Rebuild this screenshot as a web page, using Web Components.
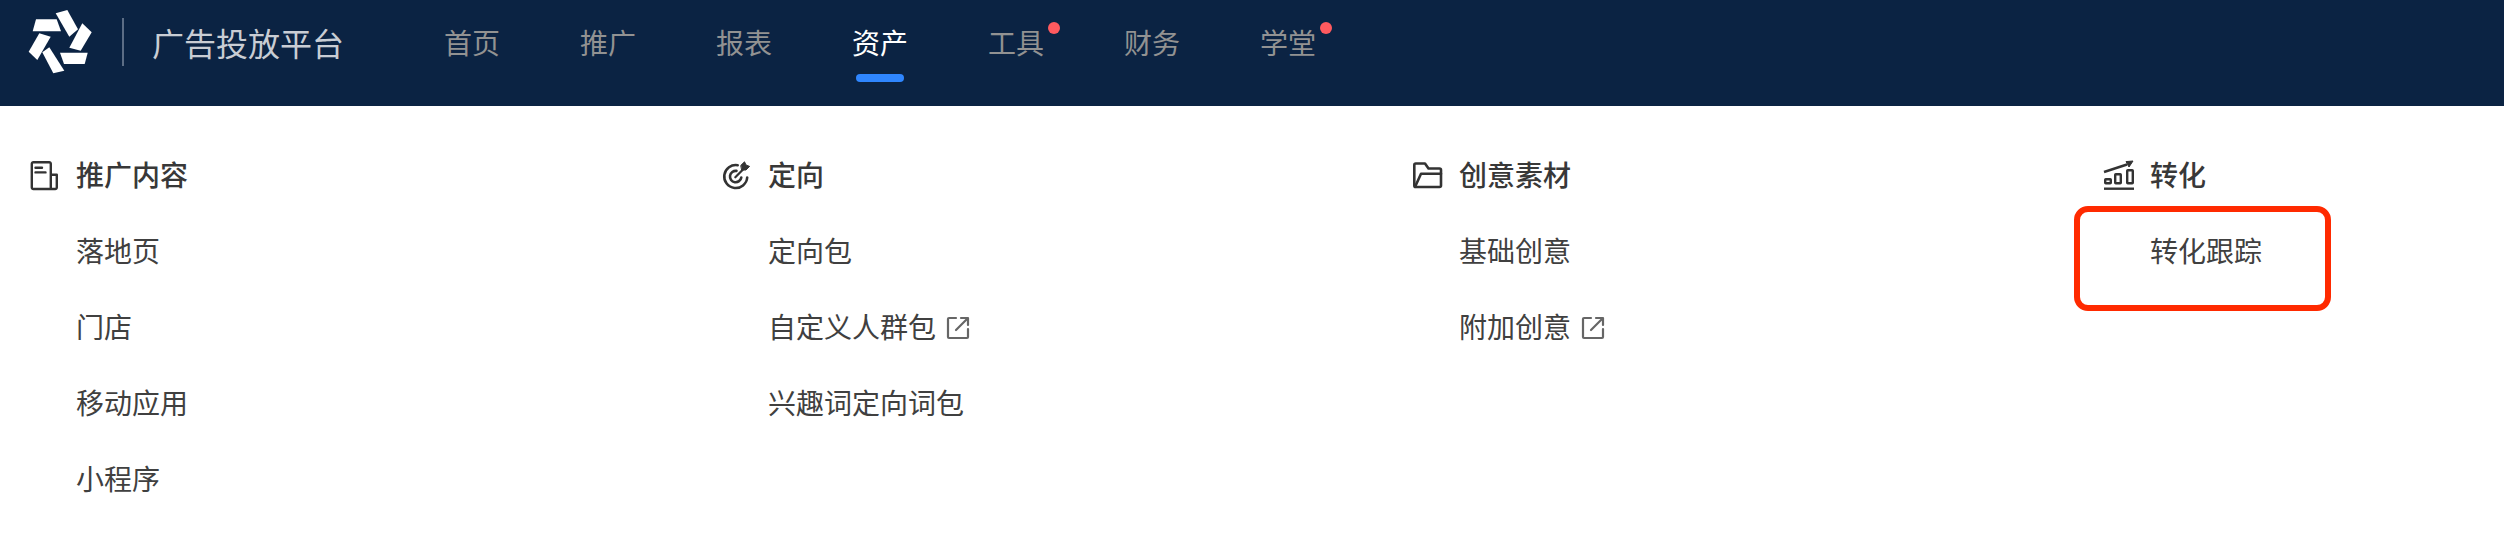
<!DOCTYPE html>
<html lang="zh-CN">
<head>
<meta charset="utf-8">
<title>广告投放平台</title>
<style>
  html, body {
    margin: 0;
    background: #fff;
    font-family: "Noto Sans CJK SC", "Noto Sans", sans-serif;
  }
</style>
</head>
<body>
<ad-header>
  <nav-tab>首页</nav-tab>
  <nav-tab>推广</nav-tab>
  <nav-tab>报表</nav-tab>
  <nav-tab active>资产</nav-tab>
  <nav-tab dot>工具</nav-tab>
  <nav-tab>财务</nav-tab>
  <nav-tab dot>学堂</nav-tab>
</ad-header>

<asset-menu>
  <menu-column heading="推广内容">
    <svg slot="icon" width="32" height="32" viewBox="0 0 32 32" fill="none" stroke="#333" stroke-width="2.4" stroke-linecap="round" stroke-linejoin="round">
      <path d="M22.8 29V3.8a1.6 1.6 0 0 0-1.6-1.6H5.4a1.6 1.6 0 0 0-1.6 1.6v23.6A1.6 1.6 0 0 0 5.4 29h21.8a1.6 1.6 0 0 0 1.6-1.6V14.8h-6"/>
      <path d="M7.5 7.8h6.5M7.5 12.4h10"/>
    </svg>
    <menu-link>落地页</menu-link>
    <menu-link>门店</menu-link>
    <menu-link>移动应用</menu-link>
    <menu-link>小程序</menu-link>
  </menu-column>

  <menu-column heading="定向">
    <svg slot="icon" width="32" height="32" viewBox="0 1 32 32" fill="none" stroke="#333" stroke-width="2.6" stroke-linecap="round" stroke-linejoin="round">
      <path d="M17.7 6.2A11.5 11.5 0 1 0 27.2 18.5"/>
      <path d="M16.5 11.9A5.7 5.7 0 1 0 21.3 18.5"/>
      <path d="M15.3 18.3 24 9.4" stroke-width="2.2"/>
      <polygon points="21,6.2 24.5,2.8 26,6 29.6,7.4 26,11 22,11" fill="#333" stroke-width="1"/>
    </svg>
    <menu-link>定向包</menu-link>
    <menu-link external>自定义人群包</menu-link>
    <menu-link>兴趣词定向词包</menu-link>
  </menu-column>

  <menu-column heading="创意素材">
    <svg slot="icon" width="32" height="32" viewBox="0 0 32 32" fill="none" stroke="#333" stroke-width="2.6" stroke-linecap="round" stroke-linejoin="round">
      <path d="M3.3 25.5V5A1.5 1.5 0 0 1 4.8 3.5H14L17.5 8.5H28.5A1.5 1.5 0 0 1 30 10V25.5A1.5 1.5 0 0 1 28.5 27H4.8A1.5 1.5 0 0 1 3.3 25.5Z"/>
      <path d="M4 27 10 13.8H30"/>
    </svg>
    <menu-link>基础创意</menu-link>
    <menu-link external>附加创意</menu-link>
  </menu-column>

  <menu-column heading="转化">
    <svg slot="icon" width="32" height="32" viewBox="0 0 32 32" fill="none" stroke="#333" stroke-width="2.4" stroke-linejoin="round" style="overflow: visible">
      <path d="M2 28.7H32"/>
      <path d="M2 12 25 4.5"/>
      <polygon points="24,1.6 31,1 27,7" fill="#333" stroke-width="1"/>
      <rect x="3.2" y="19.2" width="5.6" height="4.1" rx="0.6"/>
      <rect x="13.2" y="14.2" width="5.6" height="9.1" rx="0.6"/>
      <rect x="25.2" y="10.2" width="5.6" height="13.1" rx="0.6"/>
    </svg>
    <menu-link marked>转化跟踪</menu-link>
  </menu-column>
</asset-menu>

<script>
// Top bar: logo, product name, tabs in the slot
class AdHeader extends HTMLElement {
  constructor() {
    super();
    this.attachShadow({ mode: "open" });
  }

  connectedCallback() {
    this.shadowRoot.innerHTML = `
      <style>
        :host {
          display: flex;
          align-items: center;
          box-sizing: border-box;
          height: 106px;
          padding: 0 0 22px 28px;
          background: #0b2343;
        }
        svg {
          display: block;
          flex: none;
        }
        .divider {
          width: 2px;
          height: 48px;
          margin: 0 28px 0 30px;
          background: #5c6d85;
        }
        .name {
          width: 192px;
          margin-right: 100px;
          font-size: 32px;
          line-height: 44px;
          color: #c9cdd4;
          white-space: nowrap;
        }
        nav {
          display: flex;
          gap: 80px;
        }
      </style>
      <svg width="64" height="64" viewBox="28 10 64 64" fill="#fff">
        <polygon points="36,19.3 56.7,19.3 61,31.3 32.7,31.3"/>
        <polygon points="55.7,13.3 67.3,10 78,29.3 69.3,36.7"/>
        <polygon points="82.3,23.3 91.7,32.3 80.7,50.7 69.3,47.7"/>
        <polygon points="60,52.7 87.7,52.7 84.7,64 64,64"/>
        <polygon points="42.3,52.3 49.3,47.3 64.3,70.7 53.3,73.3"/>
        <polygon points="39.3,33.3 50.7,36.7 37.3,60 28.7,51.7"/>
      </svg>
      <div class="divider"></div>
      <div class="name">广告投放平台</div>
      <nav><slot></slot></nav>
    `;
  }
}

customElements.define("ad-header", AdHeader);

// One tab of the top bar, with "active" and "dot" attributes
class NavTab extends HTMLElement {
  constructor() {
    super();
    this.attachShadow({ mode: "open" });
  }

  connectedCallback() {
    this.shadowRoot.innerHTML = `
      <style>
        :host {
          display: block;
          position: relative;
          font-size: 28px;
          line-height: 40px;
          color: #929292;
          white-space: nowrap;
        }
        :host([active]) {
          color: #fff;
        }
        :host([active])::after {
          content: "";
          position: absolute;
          left: 4px;
          right: 4px;
          top: 52px;
          height: 8px;
          border-radius: 4px;
          background: #2f86ff;
        }
        :host([dot])::before {
          content: "";
          position: absolute;
          right: -16px;
          top: 0;
          width: 12px;
          height: 12px;
          border-radius: 50%;
          background: #ff5a5f;
        }
      </style>
      <slot></slot>
    `;
  }
}

customElements.define("nav-tab", NavTab);

// White panel holding the four columns
class AssetMenu extends HTMLElement {
  constructor() {
    super();
    this.attachShadow({ mode: "open" });
  }

  connectedCallback() {
    this.shadowRoot.innerHTML = `
      <style>
        :host {
          display: grid;
          grid-template-columns: 692px 691px 691px 1fr;
          box-sizing: border-box;
          height: 436px;
          padding: 30px 0 0 28px;
          background: #fff;
        }
      </style>
      <slot></slot>
    `;
  }
}

customElements.define("asset-menu", AssetMenu);

// Column: icon + bold heading, then the links
class MenuColumn extends HTMLElement {
  constructor() {
    super();
    this.attachShadow({ mode: "open" });
  }

  connectedCallback() {
    const heading = this.getAttribute("heading") || "";
    this.shadowRoot.innerHTML = `
      <style>
        :host {
          display: block;
        }
        .head {
          display: flex;
          align-items: center;
          gap: 16px;
          height: 76px;
          font-size: 28px;
          font-weight: 500;
          color: #383838;
        }
        .icon {
          display: flex;
          width: 32px;
          height: 32px;
          margin-top: 4px;
        }
      </style>
      <div class="head">
        <span class="icon"><slot name="icon"></slot></span>
        <span>${heading}</span>
      </div>
      <slot></slot>
    `;
  }
}

customElements.define("menu-column", MenuColumn);

// Link row. "external" adds the open-out icon, "marked" draws the red frame over it
class MenuLink extends HTMLElement {
  constructor() {
    super();
    this.attachShadow({ mode: "open" });
  }

  connectedCallback() {
    const external = this.hasAttribute("external")
      ? `<svg width="24" height="24" viewBox="0 0 24 24" fill="none" stroke="#666" stroke-width="2.2" stroke-linecap="round" stroke-linejoin="round">
          <path d="M10 2H3a1 1 0 0 0-1 1v18a1 1 0 0 0 1 1h18a1 1 0 0 0 1-1v-8"/>
          <path d="M10 14 21 3M15 2h7v7"/>
        </svg>`
      : "";
    this.shadowRoot.innerHTML = `
      <style>
        :host {
          display: flex;
          align-items: center;
          gap: 10px;
          position: relative;
          height: 76px;
          padding-left: 48px;
          font-size: 28px;
          color: #404040;
        }
        svg {
          margin-top: 4px;
        }
        :host([marked])::after {
          content: "";
          position: absolute;
          box-sizing: border-box;
          left: -28px;
          top: -6px;
          width: 257px;
          height: 105px;
          border: 6px solid #ff2a00;
          border-radius: 14px;
        }
      </style>
      <span><slot></slot></span>
      ${external}
    `;
  }
}

customElements.define("menu-link", MenuLink);
</script>
</body>
</html>
